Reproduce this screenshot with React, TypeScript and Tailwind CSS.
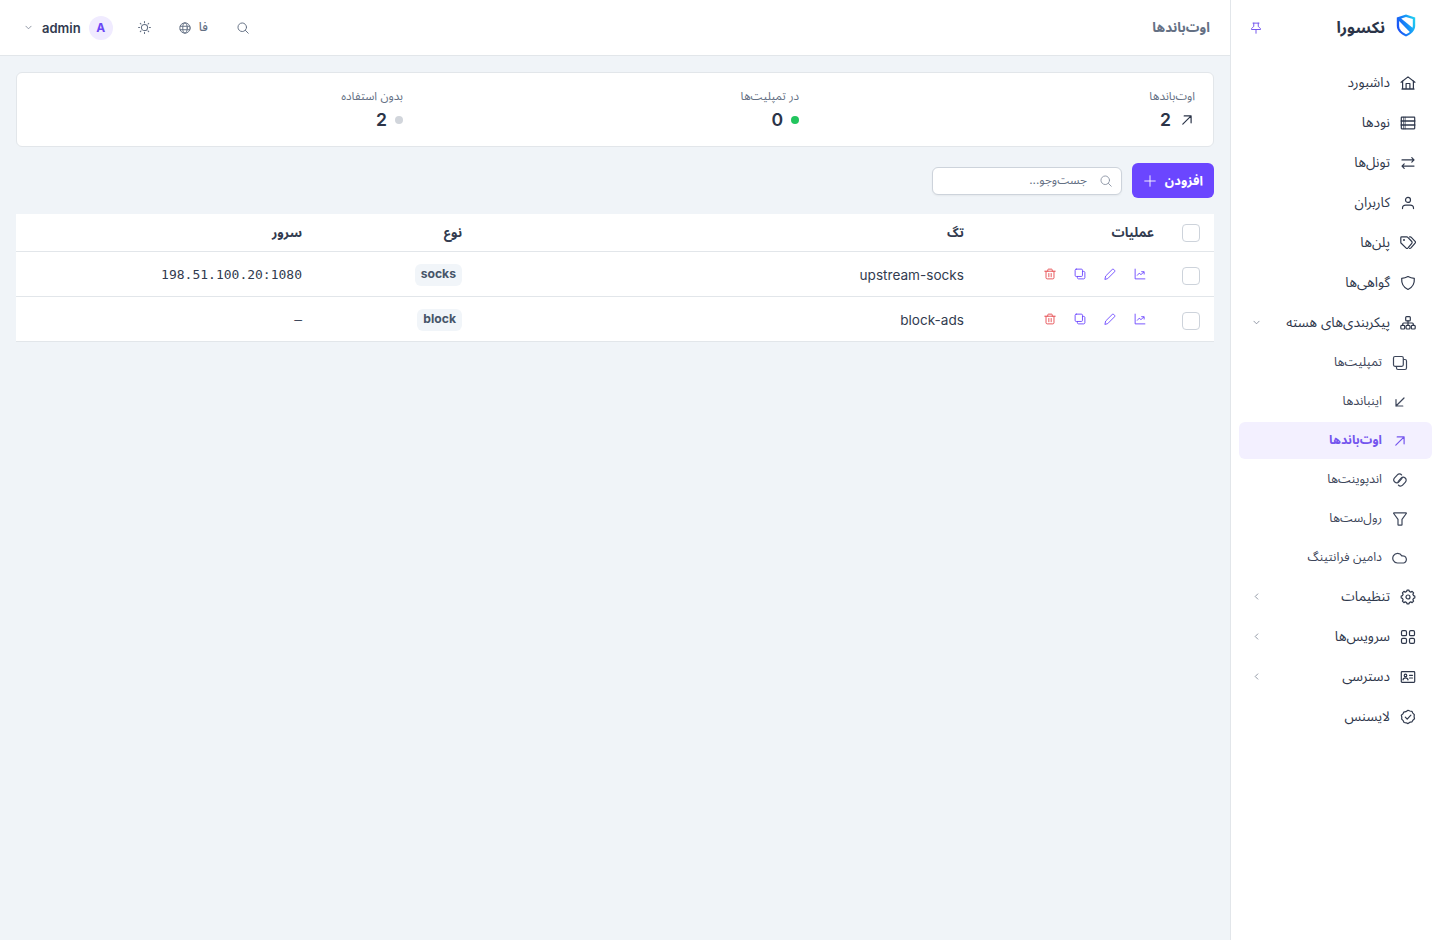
import type { ReactNode } from "react"
import clsx from "clsx"

const paths: Record<string, ReactNode> = {
  home: (
    <>
      <path d="M1.1 7.3 8 1.9l6.9 5.4" />
      <path d="M2.6 6.2V14h10.8V6.2" />
      <path d="M6.1 14V8.5h3.8V14M1.8 14h12.4" />
    </>
  ),
  server: (
    <>
      <rect x="1.3" y="2.2" width="13.4" height="11.6" rx=".5" />
      <path d="M1.3 6h13.4M1.3 10h13.4" strokeWidth="1.6" />
      <path d="M3.6 2.2v11.6M5.2 2.2v11.6" strokeWidth=".7" />
    </>
  ),
  swap: <path d="M2 4.9h12M11.8 2.7 14 4.9l-2.2 2.2M14 11.1H2M4.2 8.9 2 11.1l2.2 2.2" />,
  user: (
    <>
      <circle cx="8" cy="4.9" r="2.5" />
      <path d="M2.5 13.6v-.5c0-1.8 1.5-2.9 3.3-2.9h4.4c1.8 0 3.3 1.1 3.3 2.9v.5" />
    </>
  ),
  tags: (
    <>
      <path d="M.8 2.7c0-.5.3-.8.8-.8h5.2c.4 0 .7.1 1 .4l4 4.2c.5.6.5 1.2 0 1.8l-4 4.8c-.5.5-1.1.5-1.6 0L1.2 8.3C.9 8 .8 7.8.8 7.4z" />
      <path d="M9.6 1.9h.7c.4 0 .7.1 1 .4l3.8 4.1c.5.6.5 1.2 0 1.8L11 12.9c-.4.4-.8.6-1.4.5" />
      <circle cx="4" cy="5" r=".4" fill="currentColor" />
    </>
  ),
  shield: <path d="M8 1.5c2 1.1 4 1.7 6.3 1.9.4 5-1.5 8.9-6.3 11.1C3.2 12.3 1.3 8.4 1.7 3.4 4 3.2 6 2.6 8 1.5z" />,
  sitemap: (
    <>
      <rect x="5.7" y="1.7" width="4.6" height="4.2" rx=".9" />
      <rect x=".8" y="10.3" width="3.9" height="3.7" rx=".9" />
      <rect x="6.05" y="10.3" width="3.9" height="3.7" rx=".9" />
      <rect x="11.3" y="10.3" width="3.9" height="3.7" rx=".9" />
      <path d="M8 5.9v4.4M2.7 10.3V9c0-.6.4-1 1-1h8.6c.6 0 1 .4 1 1v1.3" />
    </>
  ),
  clone: (
    <>
      <rect x="1.5" y="1.5" width="9.8" height="9.8" rx="1.5" />
      <path d="M11.5 4.5H13c.8 0 1.500.7 1.500 1.500v7c0 .8-.7 1.500-1.500 1.500H6c-.8 0-1.500-.7-1.500-1.500v-1.500" />
    </>
  ),
  downLeft: <path d="M12 4l-8 8M4 5.5V12h6.8" />,
  upRight: <path d="M3.8 12.2l8.3-8.3M5.2 3.9h6.9v6.9" />,
  link: (
    <g transform="rotate(42 8 8)">
      <path d="M5.8 3.2A2.7 2.7 0 0 0 2.6 5.900v4.200a2.900 2.900 0 0 0 5.800 0V6.500c0-.7-.1-1.200-.4-1.700" />
      <path d="M10.200 12.800a2.700 2.700 0 0 0 3.200-2.700V5.900a2.900 2.900 0 0 0-5.800 0v3.600c0 .7.1 1.200.4 1.700" />
    </g>
  ),
  filter: <path d="M1.9 1.9h12.2c.3 0 .4.3.2.6L10 8.4v5.3c0 .3-.2.5-.5.5h-3c-.3 0-.5-.2-.5-.5V8.4L1.7 2.5c-.2-.3-.1-.6.2-.6z" />,
  cloud: <path d="M11.6 13H5.4A4.8 4.8 0 1 1 9.8 5.9a3.6 3.6 0 1 1 1.8 7.1z" />,
  cog: (
    <>
      <path d="M6.6 2.5 7 1.2h2l.4 1.3 1.4.6 1.3-.7 1.5 1.5-.7 1.3.6 1.4 1.3.4v2l-1.3.4-.6 1.4.7 1.3-1.5 1.5-1.3-.7-1.4.6-.4 1.3H7l-.4-1.3-1.4-.6-1.3.7-1.5-1.5.7-1.3-.6-1.4L1.2 9V7l1.3-.4.6-1.4-.7-1.3 1.5-1.5 1.3.7z" />
      <circle cx="8" cy="8" r="2" />
    </>
  ),
  grid: (
    <>
      <rect x="1.5" y="1.7" width="5" height="5" rx="1.3" />
      <rect x="9.5" y="1.7" width="5" height="5" rx="1.3" />
      <rect x="1.5" y="9.3" width="5" height="5" rx="1.3" />
      <rect x="9.5" y="9.3" width="5" height="5" rx="1.3" />
    </>
  ),
  idCard: (
    <>
      <rect x="1.3" y="2.7" width="13.4" height="10.6" rx=".8" />
      <circle cx="5.5" cy="6.4" r="1.3" />
      <path d="M3 10.9c.2-2.8 4.8-2.8 5 0M9.5 6.3h3M9.5 9h3" />
    </>
  ),
  verified: (
    <>
      <path d="M8 1.3l1.9.7 2 .3.9 1.8 1.5 1.5-.2 2.1.4 2-1.5 1.4-1 1.7-2 .4-2 1.4-1.9-.8-2-.3-.9-1.8-1.5-1.5.1-2-.5-2 1.6-1.3.9-1.8 2-.4z" />
      <path d="M5.3 8.2l1.9 1.9 3.7-3.9" />
    </>
  ),
  pin: <path d="M4 1.5h8M5 1.5V6L3.2 7.4c-1 .8-1.2 1.4-1.2 2.6h12c0-1.2-.2-1.8-1.2-2.6L11 6V1.5M8 10v5" />,
  search: (
    <>
      <circle cx="7" cy="7" r="5.7" />
      <path d="M11.2 11.2L15 15" />
    </>
  ),
  globe: (
    <>
      <circle cx="8" cy="8" r="6.9" />
      <ellipse cx="8" cy="8" rx="3" ry="6.9" />
      <path d="M1.6 5.7h12.8M1.6 10.3h12.8" />
    </>
  ),
  sun: (
    <>
      <circle cx="8" cy="8" r="3.8" />
      <path d="M8 .7V2M8 14v1.3M.7 8H2M14 8h1.3M2.8 2.8l.9.9M12.3 12.3l.9.9M2.8 13.2l.9-.9M12.3 3.7l.9-.9" />
    </>
  ),
  down: <path d="M2 5l6 6 6-6" />,
  left: <path d="M11 2L5 8l6 6" />,
  plus: <path d="M8 1v14M1 8h14" />,
  chart: (
    <>
      <path d="M1.5 1.5v13h13" />
      <path d="M4.5 9.7l2.4-2.8 2.4 1.9 3.9-3.6M10.2 4.9l3.3.2v3" />
    </>
  ),
  pencil: <path d="M1.3 14.7l.9-4L11 1.9c.6-.6 1.4-.6 2 0L14.1 3c.6.6.6 1.4 0 2l-8.8 8.8z" />,
  trash: (
    <>
      <path d="M1 4.3h14M5 4.3V2.5c0-.6.4-1 1-1h4c.6 0 1 .4 1 1v1.8M2.7 4.3V13c0 .9.6 1.5 1.5 1.5h7.6c.9 0 1.5-.6 1.5-1.5V4.3" />
      <path d="M6 7.3v4.4M8 7.3v4.4M10 7.3v4.4" strokeWidth=".8" />
    </>
  )
}

function Icon({ name, className = "size-4", width = 1.2 }: { name: string; className?: string; width?: number }) {
  return (
    <svg
      viewBox="0 0 16 16"
      fill="none"
      stroke="currentColor"
      strokeWidth={width}
      strokeLinecap="round"
      strokeLinejoin="round"
      className={clsx("shrink-0", className)}
    >
      {paths[name]}
    </svg>
  )
}

function Logo() {
  return (
    <svg viewBox="0 0 20 23" className="h-[23px] w-5 shrink-0">
      <defs>
        <linearGradient id="shield" x1="0" y1="0.6" x2="1" y2="0.2">
          <stop offset="0" stopColor="#1c4df5" />
          <stop offset="0.5" stopColor="#158cf8" />
          <stop offset="1" stopColor="#22d3f0" />
        </linearGradient>
      </defs>
      <path d="M10 .6 19.2 3.4v8.4c0 4.8-3.7 8.2-9.2 10.7C4.5 20 .8 16.6.8 11.8V3.4z" fill="url(#shield)" />
      <path d="M5.200 4.400 10 2.900l6.800 2.200v6.700c0 .8-.1 1.400-.3 2z" fill="#fff" />
      <path d="M3.1 6.900l10.700 11c-1.100 1-2.400 1.700-3.800 2.300-4.400-2.100-6.900-4.800-6.900-8.600z" fill="#fff" />
    </svg>
  )
}

const mainItems = [
  { icon: "home", label: "داشبورد" },
  { icon: "server", label: "نودها" },
  { icon: "swap", label: "تونل‌ها" },
  { icon: "user", label: "کاربران" },
  { icon: "tags", label: "پلن‌ها" },
  { icon: "shield", label: "گواهی‌ها" },
  { icon: "sitemap", label: "پیکربندی‌های هسته", arrow: "down" }
]

const coreItems = [
  { icon: "clone", label: "تمپلیت‌ها" },
  { icon: "downLeft", label: "اینباندها" },
  { icon: "upRight", label: "اوت‌باندها", active: true },
  { icon: "link", label: "اندپوینت‌ها" },
  { icon: "filter", label: "رول‌ست‌ها" },
  { icon: "cloud", label: "دامین فرانتینگ" }
]

const bottomItems = [
  { icon: "cog", label: "تنظیمات", arrow: "left" },
  { icon: "grid", label: "سرویس‌ها", arrow: "left" },
  { icon: "idCard", label: "دسترسی", arrow: "left" },
  { icon: "verified", label: "لایسنس" }
]

const outbounds = [
  { tag: "upstream-socks", type: "socks", server: "198.51.100.20:1080" },
  { tag: "block-ads", type: "block", server: "—" }
]

function NavItem({ icon, label, arrow }: { icon: string; label: string; arrow?: string }) {
  return (
    <a className="flex h-[38px] items-center gap-2.5 rounded-md px-4 text-[13.6px] text-[#2f384c]">
      <Icon name={icon} />
      <span className="pb-px whitespace-nowrap">{label}</span>
      {arrow && <Icon name={arrow} className="ms-auto -me-0.5 mb-0.5 size-[7px] text-[#7c8595]" width={1.9} />}
    </a>
  )
}

function Sidebar() {
  return (
    <aside className="flex w-[210px] shrink-0 flex-col border-e border-[#e2e6ea] bg-white px-2">
      <div className="flex h-16 items-start px-4 pt-3.5">
        <Logo />
        <span className="ms-[11px] text-[16px] leading-[26px] font-bold text-[#2b3448]">نکسورا</span>
        <Icon name="pin" className="ms-auto mt-2 -me-[5px] size-3 text-[#7455ee]" width={1.3} />
      </div>
      <nav className="flex flex-col gap-0.5">
        {mainItems.map((item) => (
          <NavItem key={item.label} {...item} />
        ))}
        {coreItems.map((item) => (
          <a
            key={item.label}
            className={clsx(
              "flex h-[37px] items-center gap-2.5 rounded-md px-6 text-[12.4px]",
              item.active ? "bg-[#f3f0ff] font-bold text-[#7455ee]" : "text-[#3d465a]"
            )}
          >
            <Icon name={item.icon} />
            <span className="whitespace-nowrap">{item.label}</span>
          </a>
        ))}
        {bottomItems.map((item) => (
          <NavItem key={item.label} {...item} />
        ))}
      </nav>
    </aside>
  )
}

function Header() {
  return (
    <header className="flex h-14 items-center border-b border-[#e2e6ea] bg-white ps-5 pe-[25px] text-[#647084]">
      <h1 className="pb-px text-[13.5px] font-bold">اوت‌باندها</h1>
      <div className="ms-auto flex items-center">
        <Icon name="search" className="size-3" width={1.3} />
        <div className="ms-[29px] flex items-center gap-2 text-[12px] font-medium">
          <span className="pb-0.5">فا</span>
          <Icon name="globe" className="size-3" width={1.3} />
        </div>
        <Icon name="sun" className="ms-7 size-[13px]" width={1.3} />
        <div className="ms-[25px] flex items-center gap-2">
          <span className="flex size-6 items-center justify-center rounded-full bg-[#f0ebff] text-[12px] font-bold text-[#6b46f5]">A</span>
          <span className="pt-0.5 text-[13px] font-semibold text-[#323b4f]">admin</span>
          <Icon name="down" className="ms-0.5 size-[7px] text-[#7c8595]" width={1.9} />
        </div>
      </div>
    </header>
  )
}

function Stat({ label, value, children }: { label: string; value: number; children: ReactNode }) {
  return (
    <div className="flex flex-col px-3.5 pt-3.5">
      <span className="text-[11.7px] leading-[18px] text-[#647084]">{label}</span>
      <div className="flex h-[30px] items-center gap-2">
        {children}
        <span className="text-[17.6px] font-semibold text-[#2b3448]">{value}</span>
      </div>
    </div>
  )
}

function Checkbox({ className }: { className?: string }) {
  return <span className={clsx("block size-[18px] rounded border border-[#cdd3db] bg-white", className)} />
}

export default function App() {
  return (
    <div
      dir="rtl"
      className="flex h-[940px] w-[1440px] overflow-hidden bg-[#f0f4f8] font-[Inter,'Noto_Sans_Arabic','DejaVu_Sans',sans-serif]"
    >
      <Sidebar />
      <div className="flex min-w-0 flex-1 flex-col">
        <Header />
        <main className="flex flex-col px-4 pt-4">
          <section className="grid h-[75px] grid-cols-3 rounded-md border border-[#e2e6ea] bg-white px-1">
            <Stat label="اوت‌باندها" value={2}>
              <Icon name="upRight" className="size-4 text-[#2b3448]" />
            </Stat>
            <Stat label="در تمپلیت‌ها" value={0}>
              <span className="size-2 rounded-full bg-[#22c55e]" />
            </Stat>
            <Stat label="بدون استفاده" value={2}>
              <span className="size-2 rounded-full bg-[#d1d5db]" />
            </Stat>
          </section>

          <div className="mt-4 flex items-center gap-2.5">
            <button className="flex h-[35px] w-[82px] items-center justify-between rounded-md bg-[#6b46ff] ps-[11px] pe-3 text-[12.8px] font-bold text-white">
              <span className="pt-px">افزودن</span>
              <Icon name="plus" className="size-3" />
            </button>
            <div className="flex h-7 w-[190px] items-center gap-[13px] rounded-md border border-[#cdd3db] bg-white px-[9px] text-[11.8px] text-[#647084] shadow-xs">
              <Icon name="search" className="size-3 text-[#8a93a3]" />
              <span>جست‌وجو...</span>
            </div>
          </div>

          <table className="mt-4 w-full table-fixed border-separate border-spacing-0 bg-white text-[13.6px] text-[#323b4f]">
            <colgroup>
              <col className="w-[46px]" />
              <col className="w-[190px]" />
              <col className="w-[502px]" />
              <col className="w-[160px]" />
              <col className="w-[300px]" />
            </colgroup>
            <thead>
              <tr className="h-[38px] text-[13px] *:border-b *:border-[#e2e6ea] *:px-3.5 *:py-0 *:text-start *:font-bold">
                <th>
                  <Checkbox />
                </th>
                <th>عملیات</th>
                <th>تگ</th>
                <th>نوع</th>
                <th>سرور</th>
              </tr>
            </thead>
            <tbody>
              {outbounds.map((row) => (
                <tr key={row.tag} className="h-[45px] *:border-b *:border-[#e2e6ea] *:px-3.5 *:py-0">
                  <td>
                    <Checkbox className="mt-[3px]" />
                  </td>
                  <td>
                    <div className="flex gap-[18px] px-2 text-[#6b46ff]">
                      <Icon name="chart" className="size-3" />
                      <Icon name="pencil" className="size-3" />
                      <Icon name="clone" className="size-3" />
                      <Icon name="trash" className="size-3 text-[#e5484d]" />
                    </div>
                  </td>
                  <td>
                    <div className="pt-0.5">{row.tag}</div>
                  </td>
                  <td>
                    <div className="flex pt-px">
                      <span className="flex h-[22px] items-center rounded-md bg-[#f1f5f9] px-1.5 text-[12.2px] font-bold text-[#475569]">
                        {row.type}
                      </span>
                    </div>
                  </td>
                  <td>
                    <span dir="ltr" className="font-['DejaVu_Sans_Mono',monospace] text-[13px]">
                      {row.server}
                    </span>
                  </td>
                </tr>
              ))}
            </tbody>
          </table>
        </main>
      </div>
    </div>
  )
}
